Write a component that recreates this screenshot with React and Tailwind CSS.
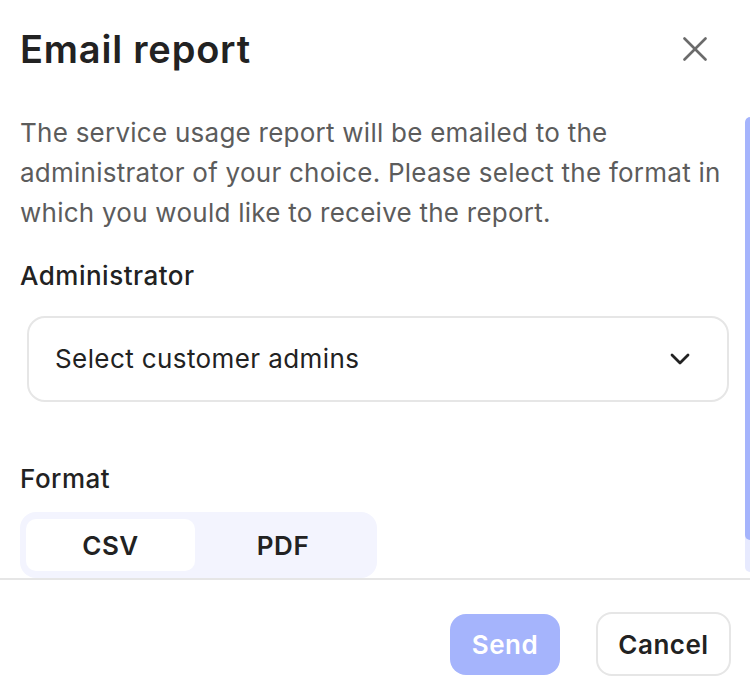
export default function App() {
  return (
    <div className="w-[750px] h-[690px] bg-white flex flex-col overflow-hidden tracking-[0.5px]" style={{ fontFamily: 'Inter, "Noto Sans", sans-serif' }}>
      <div className="h-[100px] shrink-0 flex items-start justify-between pl-[20px] pr-[43px] pt-[27px]">
        <h1 className="text-[38px] leading-[44px] font-semibold text-[#222222] tracking-[0.8px]">Email report</h1>
        <button className="mt-[10px] w-[24px] h-[24px] flex items-center justify-center" aria-label="Close">
          <svg width="24" height="24" viewBox="0 0 24 24" fill="none" stroke="#6b6b6b" strokeWidth="2.6" strokeLinecap="round">
            <line x1="1.5" y1="1.5" x2="22.5" y2="22.5" />
            <line x1="22.5" y1="1.5" x2="1.5" y2="22.5" />
          </svg>
        </button>
      </div>

      <div className="relative h-[478px] shrink-0 overflow-hidden">
        <div className="pt-[13px]">
          <p className="pl-[20px] pr-[8px] text-[26px] leading-[40px] text-[#5c5c5c] tracking-[0.25px]">
            The service usage report will be emailed to the administrator of your choice. Please select the format in which you would like to receive the report.
          </p>
          <div className="mt-[27px] px-[20px] text-[26px] leading-[32px] font-medium text-[#222222]">Administrator</div>
          <div className="mt-[24px] ml-[27px] mr-[21px] h-[86px] border-2 border-[#e6e6e6] rounded-[18px] flex items-center justify-between pl-[26px] pr-[37px]">
            <span className="text-[26px] leading-[32px] text-[#222222] tracking-[0.4px]">Select customer admins</span>
            <svg width="20" height="12" viewBox="0 0 20 12" fill="none" stroke="#222222" strokeWidth="2.8" strokeLinecap="round" strokeLinejoin="round">
              <polyline points="2,2 10,10 18,2" />
            </svg>
          </div>
          <div className="mt-[61px] px-[20px] text-[26px] leading-[32px] font-medium text-[#222222]">Format</div>
          <div className="mt-[17px] ml-[20px] w-[357px] px-[6px] py-[7px] rounded-[16px] bg-[#f3f4fe] flex">
            <div className="w-[169px] h-[52px] rounded-[10px] bg-white flex items-center justify-center text-[26px] font-semibold text-[#222222]">CSV</div>
            <div className="flex-1 h-[52px] rounded-[10px] flex items-center justify-center text-[26px] font-semibold text-[#222222]">PDF</div>
          </div>
        </div>
        <div className="absolute right-0 top-[17px] w-[5px] h-[455px] bg-[#e7eafe] rounded-l-[5px] overflow-hidden">
          <div className="h-[423px] bg-[#a5b4fc] rounded-l-[5px]"></div>
        </div>
      </div>

      <div className="border-t-2 border-[#e6e6e6] flex-1 flex items-start justify-end pr-[19px] pt-[32px]">
        <div className="flex items-center gap-[36px]">
          <button className="w-[110px] h-[61px] rounded-[16px] bg-[#a5b4fc] text-white text-[26px] font-semibold">Send</button>
          <button className="w-[135px] h-[64px] rounded-[16px] border-2 border-[#e6e6e6] bg-white text-[#222222] text-[26px] font-semibold">Cancel</button>
        </div>
      </div>
    </div>
  );
}
